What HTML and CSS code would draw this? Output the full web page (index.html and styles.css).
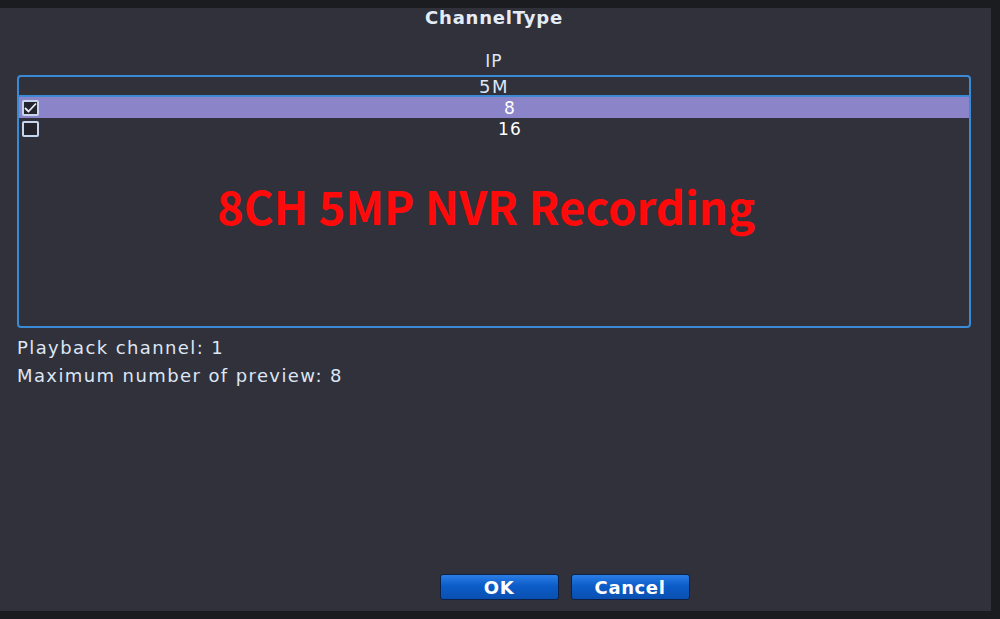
FILE: index.html
```html
<!DOCTYPE html>
<html lang="en">
<head>
  <meta charset="UTF-8" />
  <title>ChannelType</title>
  <link rel="stylesheet" href="styles.css">
</head>
<body>

  <div class="panel">
    <div class="title">ChannelType</div>
    <div class="group-label">IP</div>

    <!-- channel list -->
    <div class="list">
      <div class="list-head">5M</div>
      <div class="row selected">
        <span class="check">
          <svg width="13" height="11" viewBox="0 0 13 11"><path d="M1 6 L4.5 9.5 L12 1.5" fill="none" stroke="#e6eefa" stroke-width="1.8"/></svg>
        </span>
        <span class="row-text">8</span>
      </div>
      <div class="row">
        <span class="check"></span>
        <span class="row-text">16</span>
      </div>
      <div class="watermark">8CH 5MP NVR Recording</div>
    </div>

    <div class="info">Playback channel: 1</div>
    <div class="info">Maximum number of preview: 8</div>

    <div class="buttons">
      <button type="button" class="btn">OK</button>
      <button type="button" class="btn">Cancel</button>
    </div>
  </div>

</body>
</html>
```

FILE: styles.css
```css
body {
  margin: 0;
  background: #1b1c20;
  font-family: 'DejaVu Sans', 'Liberation Sans', sans-serif;
  color: #dde6f5;
  height: 619px;
  overflow: hidden;
}

.panel {
  width: 991px;
  height: 603px;
  margin-top: 8px;
  background: #31313b;
  box-sizing: border-box;
  padding: 0 20px 11px 17px;
  display: flex;
  flex-direction: column;
}

.title {
  height: 20px;
  line-height: 20px;
  text-align: center;
  font-size: 18px;
  font-weight: bold;
  letter-spacing: 0.8px;
  color: #e4ecf8;
}

.group-label {
  margin-top: 23px;
  height: 20px;
  line-height: 20px;
  text-align: center;
  font-size: 17px;
  letter-spacing: 1px;
}

.list {
  position: relative;
  margin-top: 4px;
  height: 253px;
  box-sizing: border-box;
  border: 2px solid #3a8ad6;
  border-radius: 4px;
}

.list-head {
  height: 18px;
  line-height: 20px;
  text-align: center;
  font-size: 18px;
  letter-spacing: 1.4px;
  border-bottom: 2px solid #3a8ad6;
}

.row {
  height: 21px;
  display: flex;
  align-items: center;
  padding-left: 3px;
}

.row.selected {
  background: #8b84c8;
}

.row-text {
  flex: 1;
  text-align: center;
  font-size: 17px;
  letter-spacing: 1.2px;
  color: #ffffff;
  padding-left: 12px;
}

.check {
  width: 13px;
  height: 12px;
  border: 2px solid #c6d6ee;
  border-radius: 2px;
  background: #24242c;
  display: flex;
  align-items: center;
  justify-content: center;
}

.watermark {
  position: absolute;
  left: 198px;
  top: 106px;
  font-family: 'Noto Sans CJK SC', 'Noto Sans', sans-serif;
  font-weight: bold;
  font-size: 45.5px;
  line-height: 1;
  color: #ff0a0a;
  white-space: nowrap;
}

.info {
  margin-top: 10px;
  font-size: 18px;
  line-height: 20px;
  letter-spacing: 1.4px;
}

.info + .info {
  margin-top: 8px;
}

.buttons {
  margin-top: auto;
  display: flex;
  justify-content: center;
  gap: 12px;
  padding-left: 141px;
}

.btn {
  width: 119px;
  height: 26px;
  border: 1px solid #0b2246;
  border-radius: 3px;
  background: linear-gradient(#2a7fe6, #0c5cc8 45%, #0a4fb0);
  color: #ffffff;
  font-family: 'DejaVu Sans', 'Liberation Sans', sans-serif;
  font-size: 18px;
  font-weight: bold;
  letter-spacing: 0.6px;
  padding: 0;
}
```
